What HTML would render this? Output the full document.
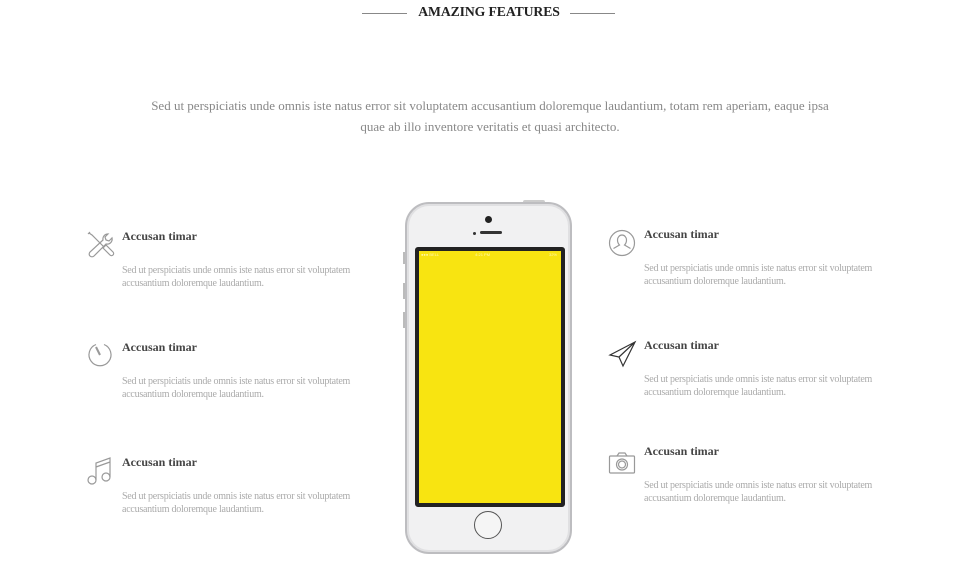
<!DOCTYPE html>
<html><head><meta charset="utf-8"><style>
body{margin:0;width:970px;height:564px;background:#fff;position:relative;overflow:hidden;font-family:"Liberation Serif",serif}
.h{position:absolute;top:4px;left:0;width:978px;text-align:center;font-size:13.7px;font-weight:bold;color:#222;letter-spacing:-0.1px}
.ln{position:absolute;top:13px;height:1px;background:#888;width:45px}
.p{position:absolute;top:95px;left:140px;width:700px;text-align:center;font-size:13px;line-height:21px;color:#888}
.f{position:absolute;width:270px}
.f b{display:block;font-size:12px;color:#444;line-height:14px}
.f span{display:block;margin-top:21px;font-size:10px;line-height:13px;color:#aaa;letter-spacing:-0.25px}
.ic{position:absolute}
</style></head><body>
<div class="ln" style="left:362px"></div><div class="ln" style="left:570px"></div>
<div class="h">AMAZING FEATURES</div>
<div class="p">Sed ut perspiciatis unde omnis iste natus error sit voluptatem accusantium doloremque laudantium, totam rem aperiam, eaque ipsa quae ab illo inventore veritatis et quasi architecto.</div>

<div class="f" style="left:122px;top:229px"><b>Accusan timar</b><span>Sed ut perspiciatis unde omnis iste natus error sit voluptatem accusantium doloremque laudantium.</span></div>
<div class="f" style="left:122px;top:340px"><b>Accusan timar</b><span>Sed ut perspiciatis unde omnis iste natus error sit voluptatem accusantium doloremque laudantium.</span></div>
<div class="f" style="left:122px;top:455px"><b>Accusan timar</b><span>Sed ut perspiciatis unde omnis iste natus error sit voluptatem accusantium doloremque laudantium.</span></div>
<div class="f" style="left:644px;top:227px"><b>Accusan timar</b><span>Sed ut perspiciatis unde omnis iste natus error sit voluptatem accusantium doloremque laudantium.</span></div>
<div class="f" style="left:644px;top:338px"><b>Accusan timar</b><span>Sed ut perspiciatis unde omnis iste natus error sit voluptatem accusantium doloremque laudantium.</span></div>
<div class="f" style="left:644px;top:444px"><b>Accusan timar</b><span>Sed ut perspiciatis unde omnis iste natus error sit voluptatem accusantium doloremque laudantium.</span></div>

<svg class="ic" style="left:86px;top:230px" width="30" height="30" viewBox="0 0 30 30" fill="none" stroke="#999" stroke-width="1.2"><path d="M3 3l3 2 12 12M2 4l2-2M17 18l7 7a2 2 0 0 0 3-3l-7-7z"/><path d="M22 4a5 5 0 0 0-5 6L4 22a2.5 2.5 0 0 0 4 4l12-12a5 5 0 0 0 6-6l-3 3-3-1-1-3z"/></svg>
<svg class="ic" style="left:86px;top:341px" width="28" height="28" viewBox="0 0 28 28" fill="none" stroke="#999" stroke-width="1.2"><path d="M10 3.5A11 11 0 1 0 18 3.5"/><path d="M10 6l4 8" stroke-width="2"/></svg>
<svg class="ic" style="left:86px;top:454px" width="30" height="32" viewBox="0 0 30 32" fill="none" stroke="#999" stroke-width="1.2"><circle cx="6" cy="26" r="4"/><circle cx="20" cy="23" r="4"/><path d="M10 26V9l14-5v19M10 13l14-5"/></svg>
<svg class="ic" style="left:608px;top:229px" width="28" height="28" viewBox="0 0 28 28" fill="none" stroke="#999" stroke-width="1.2"><circle cx="14" cy="14" r="12.5"/><path d="M14 6a4.5 5 0 0 0-4.5 5c0 3 2 5 2 5l-6 3.5M14 6a4.5 5 0 0 1 4.5 5c0 3-2 5-2 5l6 3.5"/></svg>
<svg class="ic" style="left:608px;top:340px" width="30" height="28" viewBox="0 0 30 28" fill="none" stroke="#333" stroke-width="1.2"><path d="M27 2L2 15l9 2 4 9z M11 17L27 2"/></svg>
<svg class="ic" style="left:608px;top:451px" width="28" height="24" viewBox="0 0 28 24" fill="none" stroke="#999" stroke-width="1.2"><rect x="1.5" y="5" width="25" height="17" rx="1"/><path d="M9 5l2-3h6l2 3"/><circle cx="14" cy="13.5" r="5.5"/><circle cx="14" cy="13.5" r="3.5"/></svg>

<!-- phone -->
<div style="position:absolute;left:523px;top:200px;width:22px;height:4px;background:#ccc;border-radius:2px"></div>
<div style="position:absolute;left:403px;top:252px;width:3px;height:12px;background:#bbb"></div>
<div style="position:absolute;left:403px;top:283px;width:3px;height:16px;background:#bbb"></div>
<div style="position:absolute;left:403px;top:312px;width:3px;height:16px;background:#bbb"></div>
<div style="position:absolute;left:405px;top:202px;width:163px;height:348px;border-radius:24px;background:#f1f1f2;border:2px solid #bdbdc0;box-shadow:inset 0 0 0 2px #e0e0e2"></div>
<div style="position:absolute;left:485px;top:216px;width:7px;height:7px;border-radius:50%;background:#222"></div>
<div style="position:absolute;left:473px;top:232px;width:3px;height:3px;border-radius:50%;background:#333"></div>
<div style="position:absolute;left:480px;top:231px;width:22px;height:3px;border-radius:2px;background:#333"></div>
<div style="position:absolute;left:415px;top:247px;width:142px;height:252px;background:#f8e411;border:4px solid #222;border-radius:3px"></div>
<div style="position:absolute;left:421px;top:252px;font:4px 'Liberation Sans',sans-serif;color:#fff8b0;width:136px">
<span>●●● BELL</span><span style="margin-left:36px">4:21 PM</span><span style="float:right">32%</span></div>
<div style="position:absolute;left:474px;top:511px;width:28px;height:28px;border-radius:50%;border:1.5px solid #555;background:#f5f5f5;box-sizing:border-box"></div>
</body></html>
